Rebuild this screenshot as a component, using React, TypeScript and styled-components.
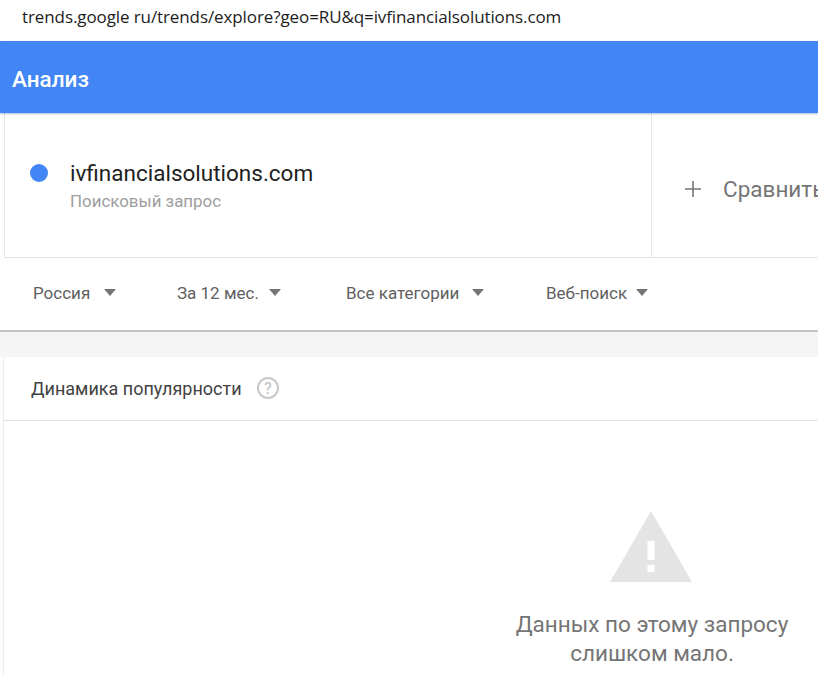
import React from "react";
import styled, { createGlobalStyle } from "styled-components";

const Global = createGlobalStyle`
  html, body { margin: 0; padding: 0; background: #fff; }
  body { font-family: Roboto, "Liberation Sans", sans-serif; overflow: hidden; }
  #root { width: 818px; height: 676px; overflow: hidden; }
`;

const Page = styled.div`
  width: 818px;
  height: 676px;
  display: flex;
  flex-direction: column;
  overflow: hidden;
  background: #fff;
`;

const UrlBar = styled.div`
  height: 41px;
  flex: none;
  box-sizing: border-box;
  padding: 6px 0 0 22px;
  font: 400 17px/22px "Open Sans", sans-serif;
  letter-spacing: -0.1px;
  color: #1c1c1c;
  white-space: nowrap;
`;

const Header = styled.header`
  height: 72px;
  flex: none;
  box-sizing: border-box;
  background: #4285f4;
  box-shadow: 0 1px 2px rgba(66, 100, 180, 0.45);
  display: flex;
  align-items: center;
  padding: 3px 0 0 12px;
  color: #fff;
  font-size: 22.5px;
  font-weight: 500;
  position: relative;
`;

const QueryRow = styled.section`
  height: 145px;
  flex: none;
  box-sizing: border-box;
  display: flex;
  margin-left: 4px;
  border-left: 1px solid #e6e6e6;
  border-bottom: 1px solid #e3e3e3;
`;

const TermCell = styled.div`
  width: 647px;
  flex: none;
  box-sizing: border-box;
  border-right: 1px solid #e6e6e6;
  display: flex;
  align-items: flex-start;
  padding: 45px 0 0 25px;
  gap: 22px;
`;

const Dot = styled.span`
  width: 18px;
  height: 18px;
  margin-top: 6px;
  border-radius: 50%;
  background: #4285f4;
  flex: none;
`;

const TermText = styled.div`
  display: flex;
  flex-direction: column;
`;

const TermName = styled.div`
  font-size: 22.5px;
  line-height: 30px;
  color: #212121;
  white-space: nowrap;
`;

const TermType = styled.div`
  margin-top: 4px;
  font-size: 16.9px;
  line-height: 18px;
  color: #9e9e9e;
  white-space: nowrap;
`;

const CompareCell = styled.div`
  display: flex;
  align-items: center;
  padding: 8px 0 0 32px;
  gap: 21px;
  font-size: 22.5px;
  color: #757575;
  white-space: nowrap;
`;

const PlusIcon = styled.svg`
  width: 18px;
  height: 18px;
  flex: none;
`;

const FilterBar = styled.nav`
  height: 74px;
  flex: none;
  box-sizing: border-box;
  display: flex;
  align-items: center;
  padding: 0 0 2px 33px;
  border-bottom: 2px solid #c4c4c4;
`;

const Filter = styled.div<{ $width: number; $gap: number }>`
  width: ${(p) => p.$width}px;
  flex: none;
  display: flex;
  align-items: center;
  gap: ${(p) => p.$gap}px;
  font-size: 17px;
  line-height: 20px;
  color: #5f5f5f;
  white-space: nowrap;
`;

const Caret = styled.span`
  width: 0;
  height: 0;
  border-left: 6.5px solid transparent;
  border-right: 6.5px solid transparent;
  border-top: 7px solid #757575;
  margin-top: -2px;
`;

const Gutter = styled.div`
  height: 25px;
  flex: none;
  background: #f5f5f5;
`;

const Card = styled.section`
  flex: 1;
  margin-left: 3px;
  border-left: 1px solid #ececec;
  background: #fff;
  display: flex;
  flex-direction: column;
`;

const CardHead = styled.div`
  height: 64px;
  flex: none;
  box-sizing: border-box;
  border-bottom: 1px solid #e3e3e3;
  display: flex;
  align-items: center;
  padding-left: 27px;
  gap: 14px;
  font-size: 18px;
  color: #424242;
  white-space: nowrap;
`;

const HelpIcon = styled.svg`
  width: 24px;
  height: 24px;
  flex: none;
  margin-top: -2px;
`;

const HelpMark = styled.text`
  font: 500 16px Roboto, sans-serif;
  fill: #c8c8c8;
`;

const Empty = styled.div`
  display: flex;
  flex-direction: column;
  align-items: center;
  width: 296px;
  margin-left: 500px;
  padding-top: 90px;
`;

const WarnIcon = styled.svg`
  width: 84px;
  height: 72px;
  flex: none;
`;

const EmptyText = styled.div`
  margin-top: 27px;
  font-size: 22.5px;
  line-height: 29px;
  color: #757575;
  text-align: center;
  white-space: nowrap;
`;

export default function App() {
  return (
    <Page>
      <Global />
      <UrlBar>trends.google ru/trends/explore?geo=RU&amp;q=ivfinancialsolutions.com</UrlBar>
      <Header>Анализ</Header>
      <QueryRow>
        <TermCell>
          <Dot />
          <TermText>
            <TermName>ivfinancialsolutions.com</TermName>
            <TermType>Поисковый запрос</TermType>
          </TermText>
        </TermCell>
        <CompareCell>
          <PlusIcon viewBox="0 0 18 18">
            <path d="M9 1v16M1 9h16" stroke="#757575" strokeWidth="1.6" fill="none" />
          </PlusIcon>
          Сравнить
        </CompareCell>
      </QueryRow>
      <FilterBar>
        <Filter $width={144} $gap={14}>Россия<Caret /></Filter>
        <Filter $width={169} $gap={10}>За 12 мес.<Caret /></Filter>
        <Filter $width={200} $gap={13}>Все категории<Caret /></Filter>
        <Filter $width={180} $gap={9}>Веб-поиск<Caret /></Filter>
      </FilterBar>
      <Gutter />
      <Card>
        <CardHead>
          Динамика популярности
          <HelpIcon viewBox="0 0 24 24">
            <circle cx="12" cy="12" r="10" fill="none" stroke="#c8c8c8" strokeWidth="2" />
            <HelpMark x="12" y="17.5" textAnchor="middle">?</HelpMark>
          </HelpIcon>
        </CardHead>
        <Empty>
          <WarnIcon viewBox="0 0 84 72">
            <path d="M41 0 L82 71 H0 Z" fill="#e4e4e4" />
            <rect x="37.5" y="30" width="7" height="19" fill="#fff" />
            <rect x="37.5" y="54" width="7" height="7" fill="#fff" />
          </WarnIcon>
          <EmptyText>
            Данных по этому запросу
            <br />
            слишком мало.
          </EmptyText>
        </Empty>
      </Card>
    </Page>
  );
}
